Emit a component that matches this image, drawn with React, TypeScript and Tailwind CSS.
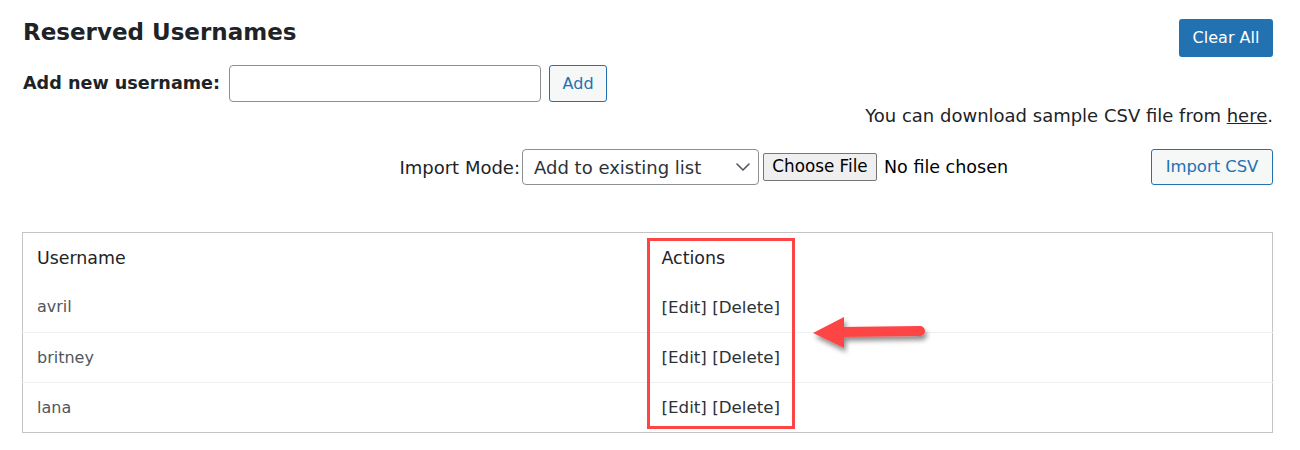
import { ChevronDown } from "lucide-react";

const ROWS = ["avril", "britney", "lana"];

function Arrow() {
  return (
    <svg width="130" height="52" viewBox="0 0 130 52" className="absolute left-[806px] top-[307px]">
      <defs>
        <filter id="drop" x="-20%" y="-40%" width="140%" height="180%">
          <feGaussianBlur in="SourceAlpha" stdDeviation="2.5" />
          <feOffset dx="2" dy="4" />
          <feComponentTransfer>
            <feFuncA type="linear" slope="0.45" />
          </feComponentTransfer>
          <feMerge>
            <feMergeNode />
            <feMergeNode in="SourceGraphic" />
          </feMerge>
        </filter>
      </defs>
      <g filter="url(#drop)">
        <line x1="34" y1="25" x2="114" y2="24" stroke="#fe4545" strokeWidth="10" strokeLinecap="round" />
        <polygon points="7,26 38,10 38,41" fill="#fe4545" />
      </g>
    </svg>
  );
}

export default function App() {
  return (
    <div className="relative h-[450px] w-[1300px] bg-white font-['DejaVu_Sans',sans-serif] text-[#1d2327]">
      <div className="pl-[22px] pr-[27px] pt-[19px]">
        <div className="flex items-start justify-between">
          <div>
            <h2 className="pl-px text-[23px] font-bold leading-[26px]">Reserved Usernames</h2>
            <div className="mt-[20px] flex items-center">
              <label className="pl-px text-[17.6px] font-bold">Add new username:</label>
              <input className="ml-[9px] h-[37px] w-[312px] rounded-[4px] border border-[#8c8f94] px-2 outline-none" />
              <button className="ml-[8px] h-[37px] w-[58px] rounded-[3px] border border-[#2271b1] bg-[#f6f7f7] text-[16px] text-[#2271b1]">
                Add
              </button>
            </div>
          </div>
          <button className="h-[38px] w-[94px] rounded-[3px] bg-[#2271b1] text-[16px] text-white">
            Clear All
          </button>
        </div>

        <p className="mt-[1px] text-right text-[18px] leading-[26px]">
          You can download sample CSV file from <span className="underline">here</span>.
        </p>

        <div className="mt-[20px] flex items-center">
          <div className="flex flex-1 items-center justify-end pr-[143px]">
            <span className="text-[18px]">Import Mode:</span>
            <div className="relative ml-[2px] flex h-[36px] w-[237px] items-center rounded-[4px] border border-[#8c8f94] pl-[11px] text-[18px] text-[#2c3338]">
              Add to existing list
              <ChevronDown className="absolute right-[3px] h-6 w-6 text-[#50575e]" strokeWidth={1.6} />
            </div>
            <button className="ml-[4px] h-[28px] w-[114px] rounded-[2px] border border-[#767676] bg-[#efefef] text-[16.8px] text-black">
              Choose File
            </button>
            <span className="ml-[7px] text-[17.5px] text-black">No file chosen</span>
          </div>
          <button className="h-[36px] w-[122px] rounded-[3px] border border-[#2271b1] bg-[#f6f7f7] text-[16.4px] text-[#2271b1]">
            Import CSV
          </button>
        </div>

        <table className="mt-[47px] w-full table-fixed border border-[#c3c4c7]">
          <thead>
            <tr className="h-[50px] text-[17.4px] text-[#1d2327]">
              <th className="w-1/2 pl-[14px] text-left font-normal">Username</th>
              <th className="pl-[14px] text-left font-normal">Actions</th>
            </tr>
          </thead>
          <tbody>
            {ROWS.map((name, i) => (
              <tr key={name} className={i > 0 ? "h-[50px] border-t border-[#f0f0f1]" : "h-[50px]"}>
                <td className="pl-[14px] text-[16px] text-[#50575e]">{name}</td>
                <td className="pl-[14px] text-[16.7px] text-[#2c3338]">[Edit] [Delete]</td>
              </tr>
            ))}
          </tbody>
        </table>
      </div>

      <div className="absolute left-[647px] top-[238px] h-[191px] w-[148px] border-[3px] border-[#fe4545]" />
      <Arrow />
    </div>
  );
}
